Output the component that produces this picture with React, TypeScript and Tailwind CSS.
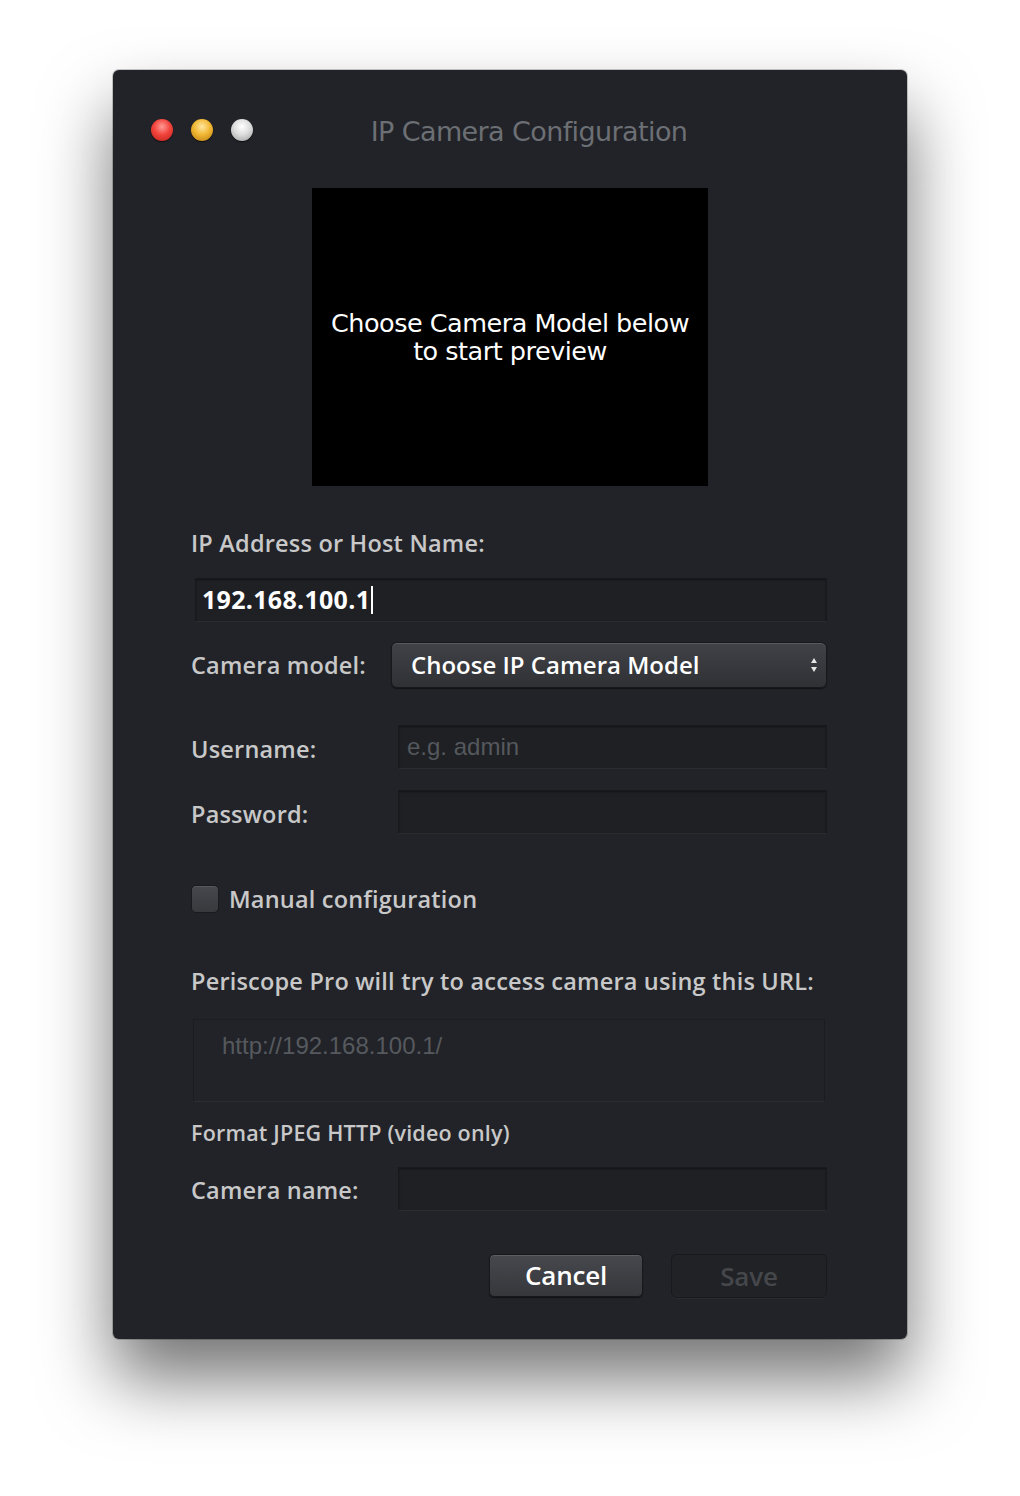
import React from "react";

const label = "text-[23.5px] leading-[28px] font-semibold text-[#c8c8c8] [font-family:'Open_Sans',sans-serif] tracking-[0.2px]";
const field = "h-[44px] bg-[#1e2024] border border-[#18191c] border-b-[#2a2c30] shadow-[inset_0_1px_2px_rgba(0,0,0,0.4)]";

const Light = ({ color }: { color: string }) => (
  <div className={`w-[22px] h-[22px] rounded-full ${color} shadow-[0_1px_1px_rgba(0,0,0,0.6)]`} />
);

const App = () => {
  return (
    <div className="min-h-[1496px] bg-white pt-[70px] pl-[113px]">
      <div className="w-[794px] h-[1269px] rounded-[6px] bg-[#212328] shadow-[0_0_0_1px_rgba(0,0,0,0.2),0_40px_70px_rgba(0,0,0,0.55)] flex flex-col">
        {/* title bar */}
        <div className="h-[118px] relative flex items-start pt-[49px] pl-[38px] gap-[18px]">
          <Light color="bg-[radial-gradient(circle_at_50%_35%,#ff9a95_0%,#f2443c_45%,#b8201a_100%)]" />
          <Light color="bg-[radial-gradient(circle_at_50%_35%,#ffe6a0_0%,#f1b733_45%,#b57a12_100%)]" />
          <Light color="bg-[radial-gradient(circle_at_50%_35%,#ffffff_0%,#dcdcdc_45%,#9a9a9a_100%)]" />
          <div className="absolute left-0 right-0 top-[46px] text-center pl-[38px] text-[27px] leading-[32px] text-[#6c6f74] [font-family:'DejaVu_Sans',sans-serif] tracking-[-0.6px]">
            IP Camera Configuration
          </div>
        </div>

        {/* preview */}
        <div className="mx-auto w-[396px] h-[298px] bg-black flex items-center justify-center">
          <p className="text-center text-white text-[25.5px] leading-[28px] [font-family:'DejaVu_Sans',sans-serif] tracking-[-0.5px]">
            Choose Camera Model below
            <br />
            to start preview
          </p>
        </div>

        <div className="px-[78px] pr-[80px] flex flex-col">
          <div className={`${label} mt-[43px]`}>IP Address or Host Name:</div>
          <div className={`${field} mt-[21px] ml-[4px] flex items-center pl-[6px]`}>
            <span className="text-white font-bold text-[25px] [font-family:'Open_Sans',sans-serif] tracking-[0.3px]">192.168.100.1</span>
            <span className="w-[2px] h-[28px] bg-white ml-[1px]" />
          </div>

          <div className="flex items-center mt-[20px]">
            <div className={`${label} w-[200px]`}>Camera model:</div>
            <div className="flex-1 h-[46px] rounded-[6px] bg-[linear-gradient(#404247,#2f3135)] border border-[#17181b] shadow-[inset_0_1px_0_rgba(255,255,255,0.12),0_1px_1px_rgba(0,0,0,0.5)] flex items-center pl-[19px] pr-[8px]">
              <span className="flex-1 text-white font-semibold text-[24px] [font-family:'Open_Sans',sans-serif]">Choose IP Camera Model</span>
              <svg width="8" height="16" viewBox="0 0 8 16">
                <path d="M4 1 L7 6 L1 6 Z" fill="#e6e6e6" />
                <path d="M4 15 L7 10 L1 10 Z" fill="#e6e6e6" />
              </svg>
            </div>
          </div>

          <div className="flex items-center mt-[37px]">
            <div className={`${label} w-[207px] pt-[3px]`}>Username:</div>
            <div className={`${field} flex-1 flex items-center pl-[8px]`}>
              <span className="text-[#55585d] text-[24px] [font-family:'Liberation_Sans',sans-serif]">e.g. admin</span>
            </div>
          </div>
          <div className="flex items-center mt-[21px]">
            <div className={`${label} w-[207px] pt-[3px]`}>Password:</div>
            <div className={`${field} flex-1`} />
          </div>

          <div className="flex items-center mt-[51px] gap-[10px]">
            <div className="w-[28px] h-[28px] rounded-[5px] bg-[linear-gradient(#46484d,#37393d)] border border-[#1a1b1e] shadow-[inset_0_1px_0_rgba(255,255,255,0.1)]" />
            <div className={label}>Manual configuration</div>
          </div>

          <div className={`${label} mt-[54px]`}>Periscope Pro will try to access camera using this URL:</div>
          <div className="mt-[24px] ml-[2px] mr-[2px] h-[83px] bg-[#212328] border border-[#1b1c20] border-b-[#2a2c30] pl-[28px] pt-[8px]">
            <span className="text-[#56595e] text-[24px] [font-family:'Liberation_Sans',sans-serif]">http://192.168.100.1/</span>
          </div>

          <div className="mt-[18px] text-[21.5px] leading-[26px] font-semibold text-[#c8c8c8] [font-family:'Open_Sans',sans-serif] tracking-[0.2px]">
            Format JPEG HTTP (video only)
          </div>

          <div className="flex items-center mt-[21px]">
            <div className={`${label} w-[207px] pt-[2px]`}>Camera name:</div>
            <div className={`${field} flex-1`} />
          </div>

          <div className="flex justify-end gap-[28px] mt-[43px]">
            <button className="w-[154px] h-[43px] rounded-[5px] bg-[linear-gradient(#46484d,#35373b)] border border-[#17181b] shadow-[inset_0_1px_0_rgba(255,255,255,0.12),0_1px_1px_rgba(0,0,0,0.5)] text-white font-semibold text-[26px] [font-family:'Open_Sans',sans-serif] tracking-[-0.2px]">
              Cancel
            </button>
            <button className="w-[156px] h-[44px] rounded-[5px] bg-[#202226] border border-[#18191c] shadow-[0_1px_0_rgba(255,255,255,0.04)] text-[#45474b] font-semibold text-[26px] [font-family:'Open_Sans',sans-serif] tracking-[-0.2px]">
              Save
            </button>
          </div>
        </div>
      </div>
    </div>
  );
};

export default App;
